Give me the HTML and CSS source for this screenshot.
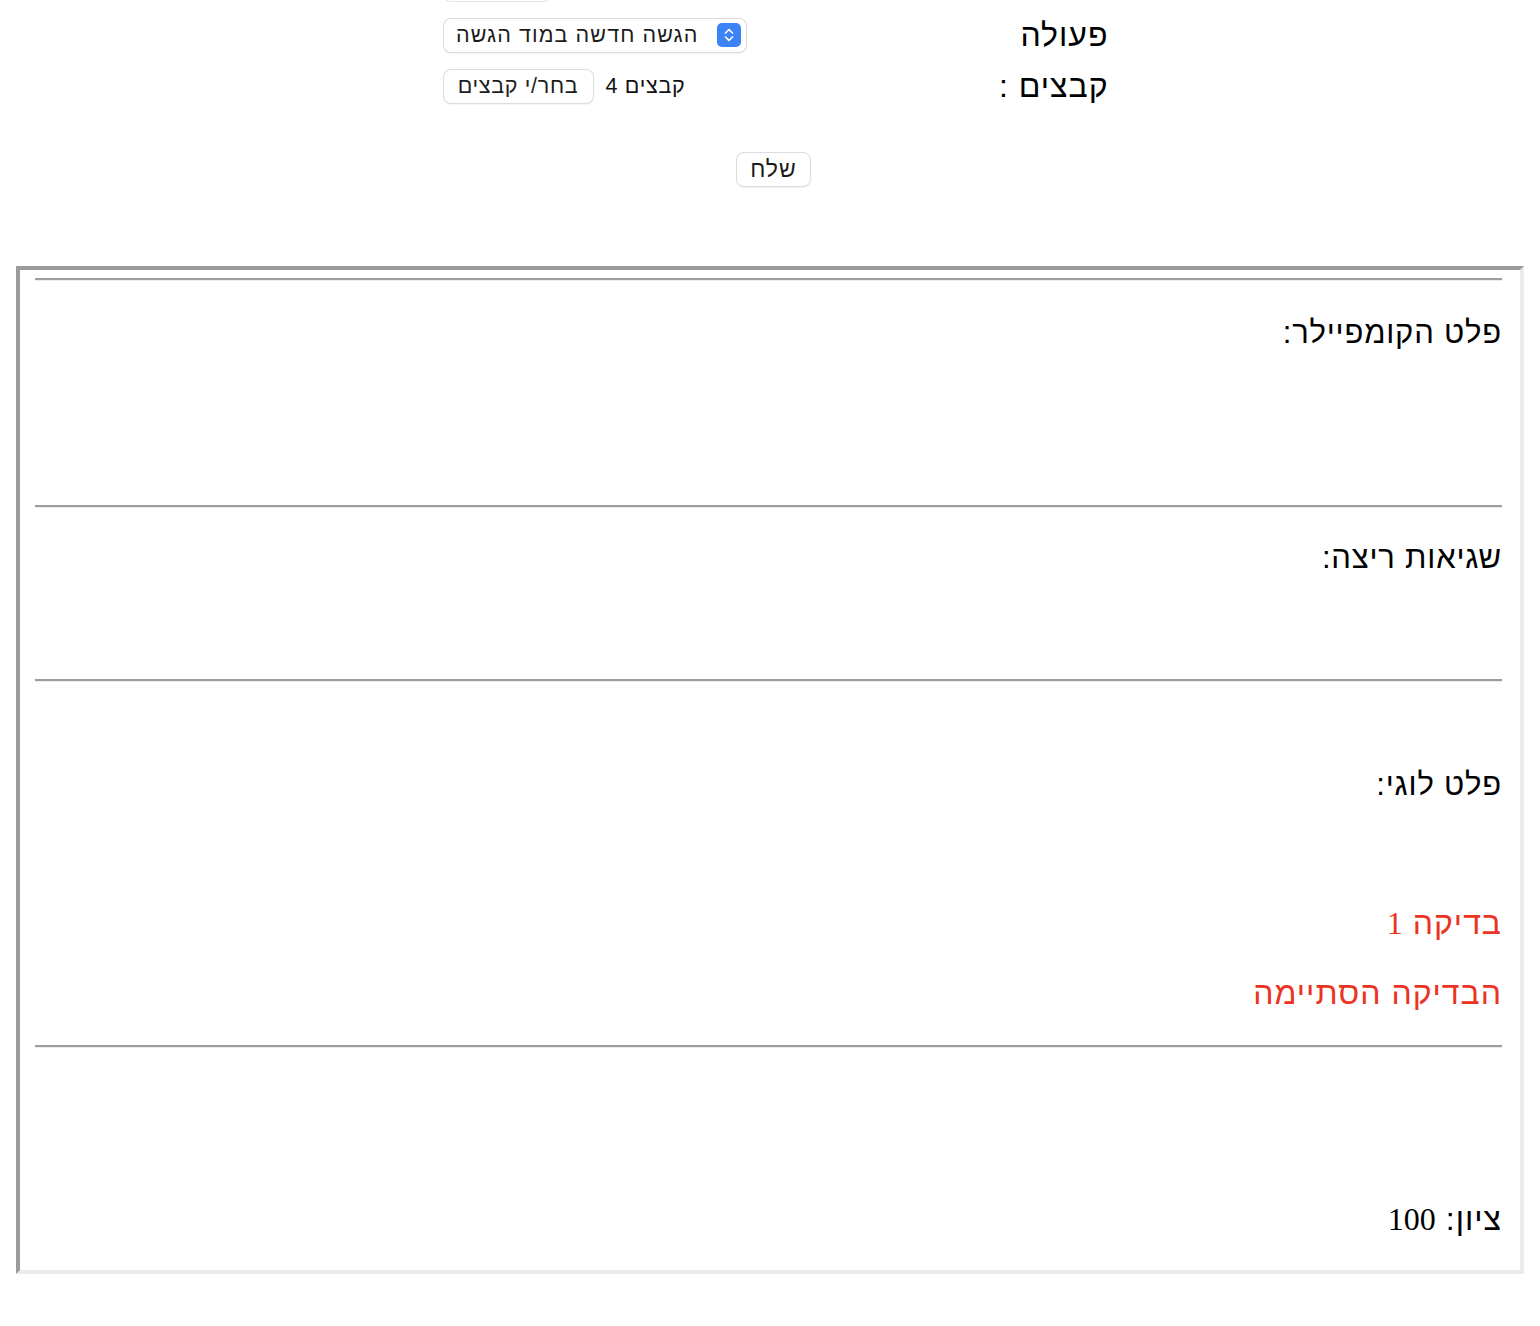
FILE: index.html
```html
<!DOCTYPE html>
<html lang="he" dir="rtl">
<head>
<meta charset="utf-8">
<title>הגשה</title>
<link rel="stylesheet" href="styles.css">
</head>
<body>
<div class="page">
  <form class="form">
    <div class="form-grid">
      <div class="label"></div>
      <div class="ctrl"><span class="ghost-box"></span></div>

      <div class="label">פעולה</div>
      <div class="ctrl">
        <div class="select">
          <span class="stepper">
            <svg width="12" height="18" viewBox="0 0 12 18"><path d="M2.5 7 L6 3.5 L9.5 7 M2.5 11 L6 14.5 L9.5 11" fill="none" stroke="#fff" stroke-width="1.7" stroke-linecap="round" stroke-linejoin="round"/></svg>
          </span>
          <span class="select-text">הגשה חדשה במוד הגשה</span>
        </div>
      </div>

      <div class="label">קבצים :</div>
      <div class="ctrl">
        <div class="file">
          <span class="btn">בחר/י קבצים</span>
          <span class="file-count">קבצים 4</span>
        </div>
      </div>
    </div>
    <div class="submit-row"><span class="btn submit">שלח</span></div>
  </form>

  <div class="results">
    <hr class="rule">
    <div class="line heading h1">פלט הקומפיילר:</div>
    <hr class="rule">
    <div class="line heading h2">שגיאות ריצה:</div>
    <hr class="rule">
    <div class="line heading h3">פלט לוגי:</div>
    <div class="line red t1"><span class="he">בדיקה</span> <span class="num">1</span></div>
    <div class="line red t2">הבדיקה הסתיימה</div>
    <hr class="rule">
    <div class="line score"><span class="he">ציון:</span> <span class="num">100</span></div>
  </div>
</div>
</body>
</html>
```
FILE: styles.css
```css
html, body {
  margin: 0;
  padding: 0;
  background: #fff;
}
body {
  font-family: "Liberation Sans", "DejaVu Sans", sans-serif;
  color: #000;
}
.page {
  margin-top: -33px;
}
.form {
  display: flex;
  flex-direction: column;
  align-items: center;
}
.form-grid {
  width: 665px;
  margin-left: 12px;
  display: grid;
  grid-template-columns: 300px 365px;
  grid-auto-rows: 34px;
  row-gap: 17px;
  align-items: center;
}
.label {
  font-size: 32px;
  letter-spacing: 1px;
  line-height: 34px;
  text-align: right;
}
.ctrl {
  justify-self: end;
  display: flex;
  align-items: center;
}
.ghost-box {
  display: block;
  width: 106px;
  height: 33px;
  margin-right: 258px;
  border-radius: 7px;
  box-shadow: 0 0 0 1px #e6e6e6, 0 1px 1px rgba(0,0,0,0.08);
}
.select {
  width: 302px;
  height: 33px;
  box-sizing: border-box;
  border-radius: 7px;
  background: #fff;
  box-shadow: 0 0 0 1px #dcdcdc, 0 1px 2px rgba(0,0,0,0.15);
  display: flex;
  align-items: center;
  padding: 0 5px 0 0;
}
.stepper {
  width: 24px;
  height: 24px;
  border-radius: 5px;
  background: #3c84f6;
  display: flex;
  align-items: center;
  justify-content: center;
}
.select-text {
  font-size: 21.5px;
  letter-spacing: 1.1px;
  margin-right: 18px;
  color: #1c1c1c;
  white-space: nowrap;
}
.file {
  direction: ltr;
  display: flex;
  align-items: center;
  width: 365px;
}
.btn {
  display: inline-flex;
  align-items: center;
  justify-content: center;
  height: 33px;
  box-sizing: border-box;
  border-radius: 7px;
  background: #fff;
  box-shadow: 0 0 0 1px #dcdcdc, 0 1px 2px rgba(0,0,0,0.15);
  font-size: 21.5px;
  letter-spacing: 0.7px;
  color: #1c1c1c;
  direction: rtl;
  white-space: nowrap;
}
.file .btn {
  width: 149px;
}
.file-count {
  direction: rtl;
  font-size: 21.5px;
  letter-spacing: 0.7px;
  margin-left: 13px;
  color: #111;
}
.submit-row {
  margin-top: 50px;
  display: flex;
  justify-content: center;
  padding-left: 7px;
}
.submit {
  width: 73px;
  height: 33px;
  font-size: 23px;
  letter-spacing: 1px;
}
.results {
  margin: 80px 16px 0 16px;
  border-style: solid;
  border-width: 4px;
  border-color: #9b9b9b #ebebeb #ebebeb #9b9b9b;
  padding: 8px 18px 33px 15px;
}
.rule {
  margin: 0;
  height: 0;
  border: 0;
  border-top: 2px solid #9d9d9d;
  border-bottom: 1px solid #ececec;
}
.line {
  font-size: 32px;
  letter-spacing: 1px;
  line-height: 36px;
  text-align: right;
  white-space: nowrap;
}
.heading {
  font-size: 31px;
  letter-spacing: 0.8px;
}
.h1 { margin-top: 34px; margin-bottom: 154px; }
.h2 { margin-top: 32px; margin-bottom: 103px; }
.h3 { margin-top: 85px; margin-bottom: 102px; }
.red { color: #eb3323; }
.t2 { margin-top: 34px; margin-bottom: 34px; }
.score { margin-top: 153px; }
.num {
  font-family: "Liberation Serif", "Times New Roman", serif;
  font-size: 32px;
  letter-spacing: 0;
}
```
